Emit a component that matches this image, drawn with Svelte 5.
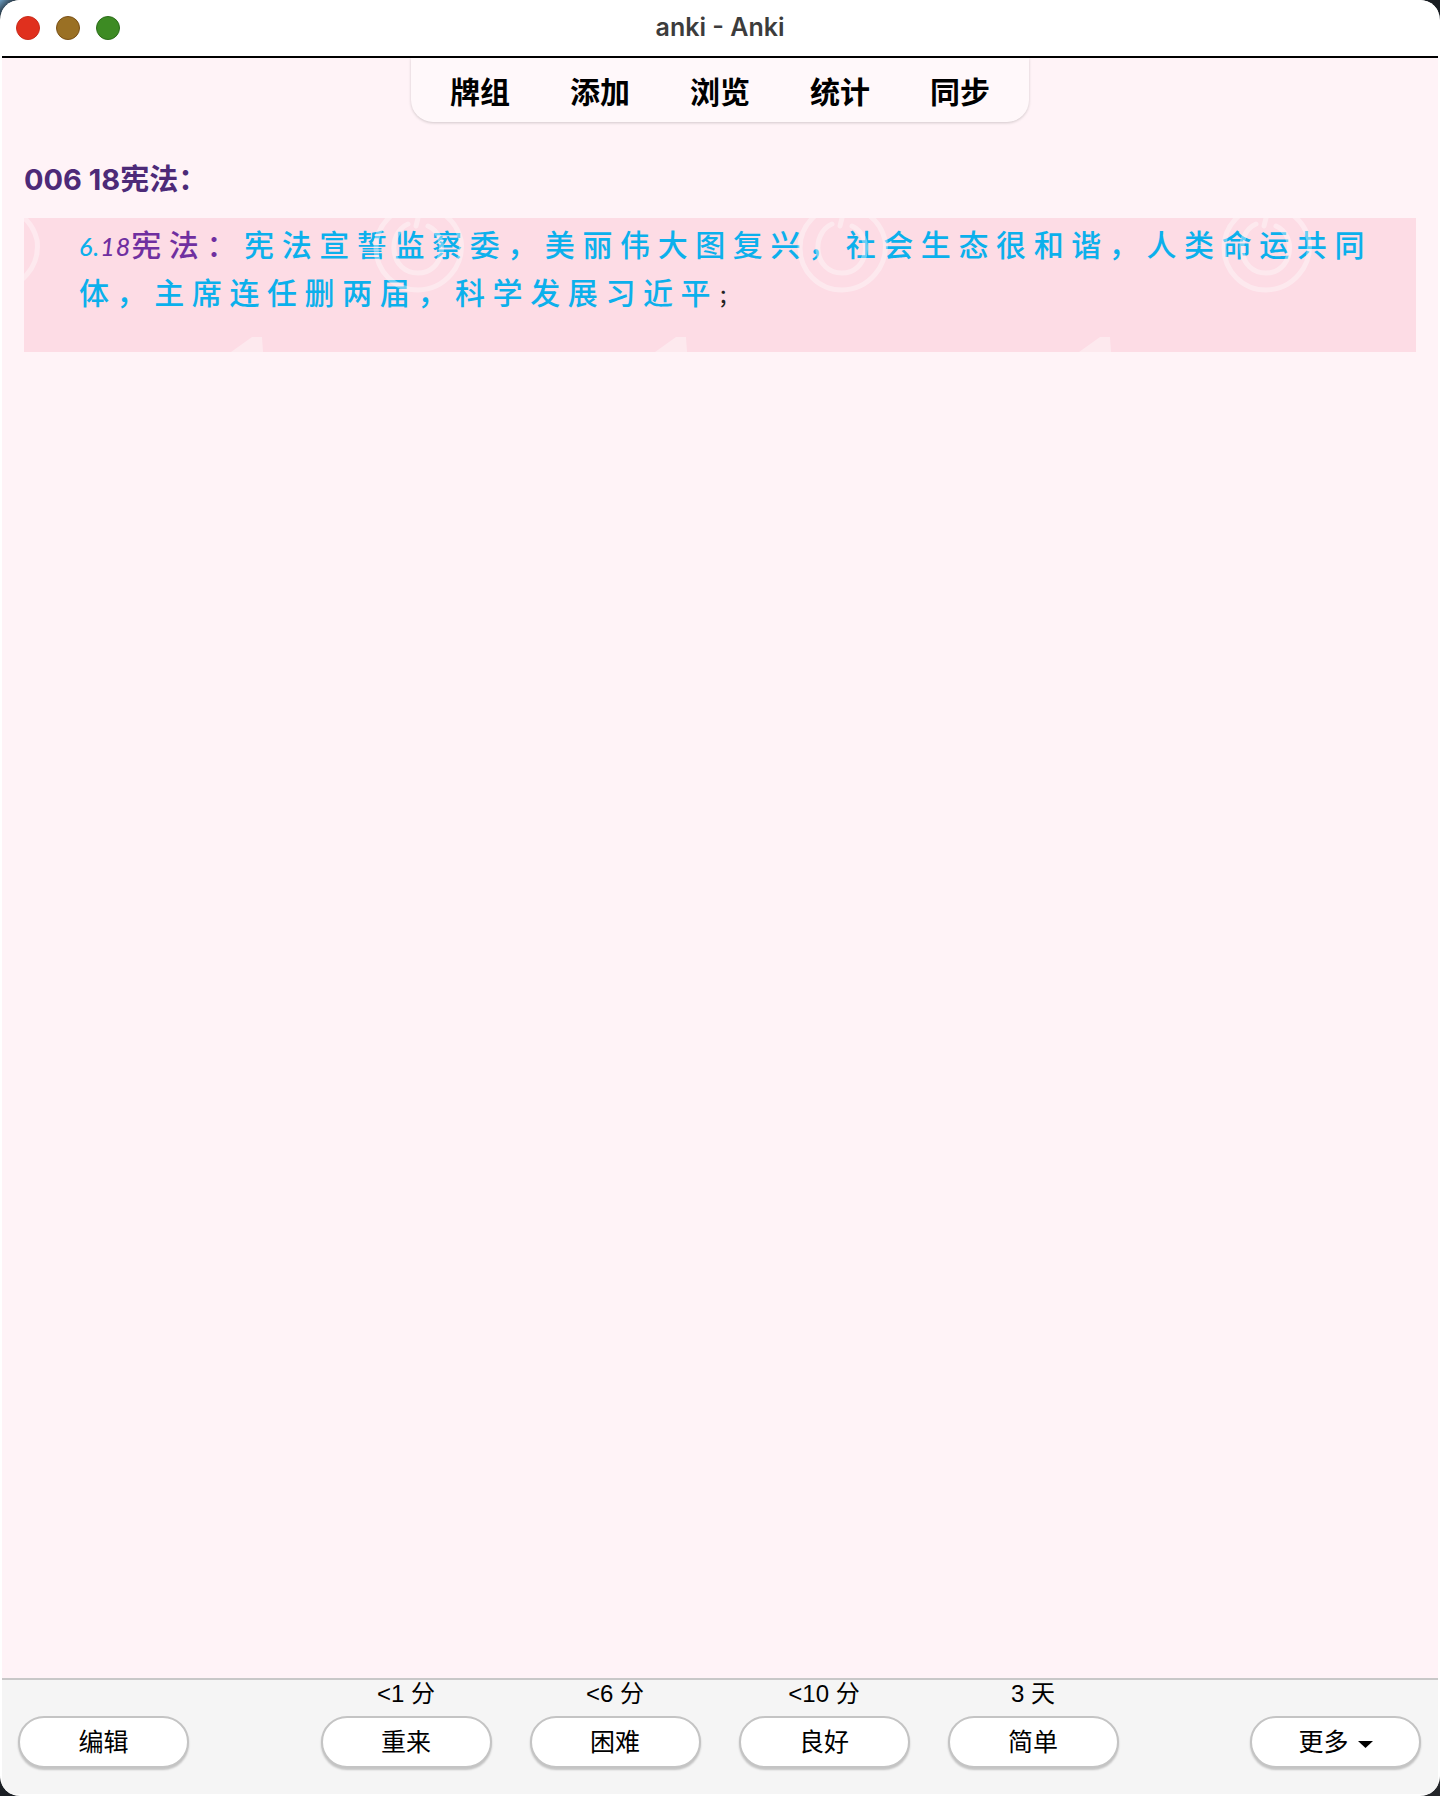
<script>
    const tabs = ['牌组', '添加', '浏览', '统计', '同步'];
    const answers = [
        { due: '<1 分', label: '重来' },
        { due: '<6 分', label: '困难' },
        { due: '<10 分', label: '良好' },
        { due: '3 天', label: '简单' }
    ];
</script>

<div class="window">
    <header class="titlebar">
        <div class="lights">
            <span class="light red"></span>
            <span class="light amber"></span>
            <span class="light green"></span>
        </div>
        <div class="title">anki - Anki</div>
        <div></div>
    </header>

    <main>
        <nav>
            {#each tabs as tab}
                <span class="tab">{tab}</span>
            {/each}
        </nav>

        <h1>006 18宪法：</h1>

        <section class="card">
            <p>
                <span class="num blue">6.</span><span class="num purple">18</span><span class="purple">宪法：</span><span class="blue">宪法宣誓监察委，美丽伟大图复兴，社会生态很和谐，人类命运共同体，主席连任删两届，科学发展习近平</span><span class="semi">；</span>
            </p>
            <!-- watermark sits on top of the text, it washes it out a little -->
            <svg class="watermark" aria-hidden="true">
                <defs>
                    <pattern id="wm" x="100" y="0" width="424" height="400" patternUnits="userSpaceOnUse">
                        <g fill="none" stroke="#fff" stroke-width="5" stroke-linecap="round">
                            <path d="M 337 22 A 44 44 0 0 1 294 72 A 42 42 0 0 1 252 30 A 42 42 0 0 1 294 -12 A 44 44 0 0 1 337 22" />
                            <path d="M 284 6 C 262 16 266 55 294 55 C 320 55 326 18 304 8" />
                            <path d="M 294 0 L 292 8" />
                        </g>
                        <path d="M 107 134 L 128 119 L 138 119 L 139 134 Z" fill="#fff" />
                    </pattern>
                </defs>
                <rect width="100%" height="100%" fill="url(#wm)" />
            </svg>
        </section>
    </main>

    <footer>
        <button class="btn">编辑</button>
        <div class="answers">
            {#each answers as a}
                <div class="answer">
                    <div class="due">{a.due}</div>
                    <button class="btn">{a.label}</button>
                </div>
            {/each}
        </div>
        <button class="btn">更多<svg class="caret" width="15" height="7" viewBox="0 0 15 7"><path d="M0 0H15L7.5 7Z" fill="#000" /></svg></button>
    </footer>
</div>

<style>
    :global(body) {
        background: linear-gradient(135deg, #6d9ec2 0, #10161c 14px, #24262a 100%);
    }

    .window {
        box-sizing: border-box;
        height: 1796px;
        display: flex;
        flex-direction: column;
        padding: 0 2px 2px;
        background: #fff;
        border-radius: 20px;
        overflow: hidden;
        font-family: "Liberation Sans", "Noto Sans CJK SC", sans-serif;
    }

    .titlebar {
        flex: none;
        height: 56px;
        display: grid;
        grid-template-columns: 1fr auto 1fr;
        align-items: center;
        border-bottom: 2px solid #000;
        background: #fff;
    }

    .lights {
        display: flex;
        gap: 16px;
        padding-left: 14px;
    }

    .light {
        box-sizing: border-box;
        width: 24px;
        height: 24px;
        border-radius: 50%;
        border: 1px solid;
    }

    .red { background: #e0301e; border-color: #c92b1b; }
    .amber { background: #9a7024; border-color: #7a5016; }
    .green { background: #3d8b23; border-color: #2b6c19; }

    .title {
        font-family: Inter, "Noto Sans CJK SC", sans-serif;
        font-size: 25px;
        font-weight: 600;
        color: #3c3c3c;
        padding-bottom: 2px;
    }

    main {
        flex: 1;
        background: #fff3f7;
        display: flex;
        flex-direction: column;
        padding: 0 22px;
    }

    nav {
        align-self: center;
        display: flex;
        gap: 60px;
        height: 64px;
        box-sizing: border-box;
        padding: 0 39px;
        align-items: center;
        background: #fff8fa;
        border-radius: 0 0 22px 22px;
        box-shadow: 0 1px 3px rgba(0, 0, 0, 0.18);
    }

    .tab {
        font-family: "Noto Sans CJK SC", sans-serif;
        font-size: 30px;
        line-height: 36px;
        font-weight: 700;
        color: #000;
    }

    h1 {
        margin: 38px 0 0;
        height: 58px;
        font-family: Inter, "Noto Sans CJK SC", sans-serif;
        font-size: 29px;
        line-height: 40px;
        font-weight: 700;
        color: #4d2a78;
    }

    .card {
        position: relative;
        height: 134px;
        box-sizing: border-box;
        padding: 3px 40px 0 55px;
        background: #fddce5;
        overflow: hidden;
    }

    .card p {
        margin: 0;
        font-family: "Noto Sans CJK SC", sans-serif;
        font-size: 30px;
        line-height: 45px;
        font-weight: 500;
        letter-spacing: 7.6px;
    }

    .num {
        font-family: Lato, sans-serif;
        font-style: italic;
        font-size: 25px;
        letter-spacing: 1px;
    }

    .blue { color: #0cb0ec; }
    .purple { color: #7030a0; }
    .semi { color: #222; font-size: 20px; }

    .watermark {
        position: absolute;
        inset: 0;
        width: 100%;
        height: 100%;
        opacity: 0.38;
        pointer-events: none;
    }

    footer {
        flex: none;
        height: 116px;
        box-sizing: border-box;
        display: flex;
        justify-content: space-between;
        align-items: flex-end;
        padding: 0 17px 26px 16px;
        background: #f5f5f5;
        border-top: 2px solid #c8c8c8;
    }

    .answers {
        display: flex;
        gap: 38px;
    }

    .answer {
        text-align: center;
    }

    .due {
        font-size: 24px;
        line-height: 28px;
        margin-bottom: 8px;
        color: #000;
    }

    .btn {
        width: 171px;
        height: 52px;
        box-sizing: border-box;
        padding: 0;
        display: block;
        background: #fff;
        border: 2px solid #c4c4c4;
        border-radius: 26px;
        box-shadow: 0 2px 2px rgba(0, 0, 0, 0.2);
        font-family: inherit;
        font-size: 25px;
        line-height: 46px;
        color: #000;
    }

    .caret {
        margin-left: 9px;
        vertical-align: 3px;
    }
</style>
